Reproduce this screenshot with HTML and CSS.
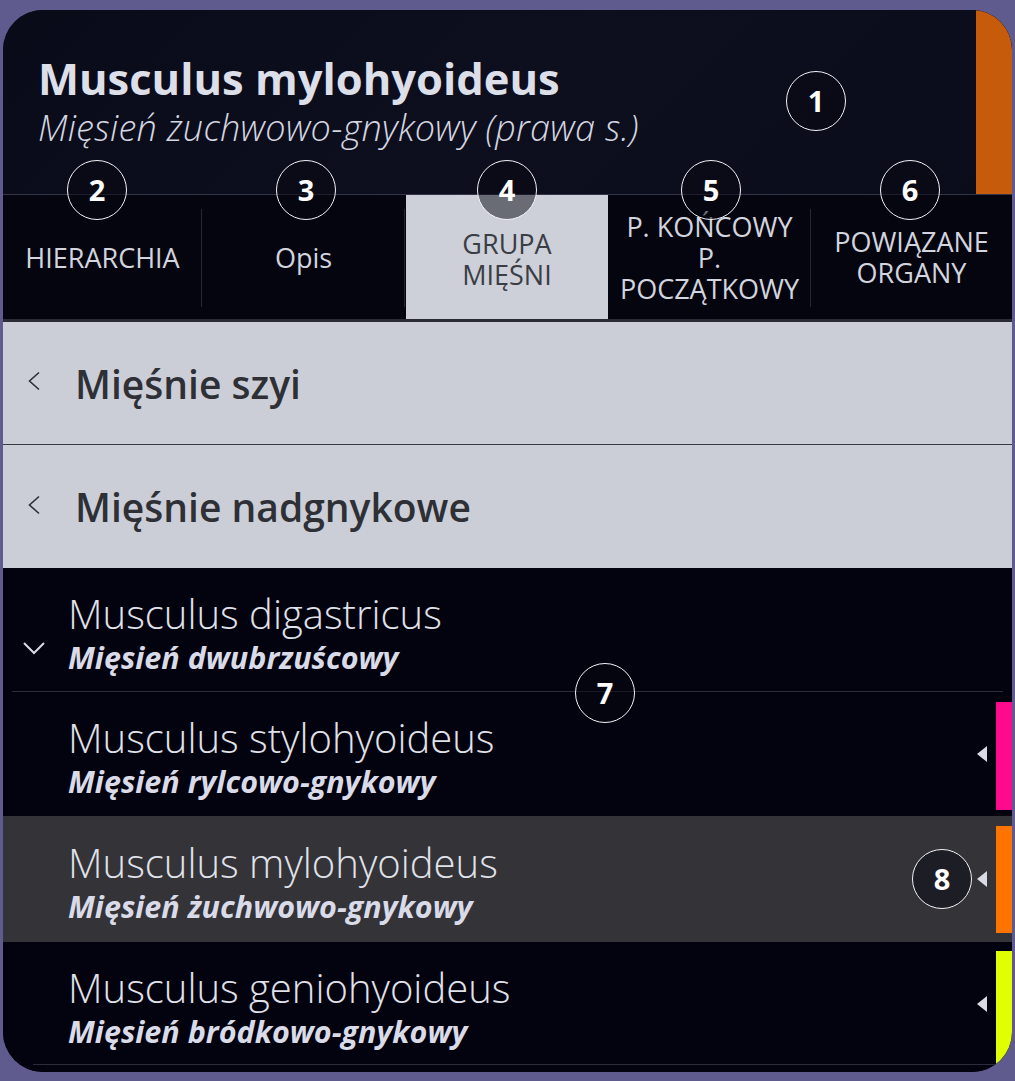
FILE: index.html
```html
<!DOCTYPE html>
<html lang="pl">
<head>
<meta charset="utf-8">
<title>Musculus mylohyoideus</title>
<link rel="stylesheet" href="styles.css">
</head>
<body>
<div class="card">
  <header class="head">
    <div class="head-text">
      <h1 class="title">Musculus mylohyoideus</h1>
      <p class="subtitle">Mięsień żuchwowo-gnykowy (prawa s.)</p>
    </div>
    <div class="head-stripe"></div>
    <span class="badge b1">1</span>
  </header>

  <nav class="tabs">
    <div class="tab sep">HIERARCHIA</div>
    <div class="tab sep tab-mixed">Opis</div>
    <div class="tab active">GRUPA<br>MIĘŚNI</div>
    <div class="tab sep">P. KOŃCOWY<br>P.<br>POCZĄTKOWY</div>
    <div class="tab">POWIĄZANE<br>ORGANY</div>
    <span class="badge b2">2</span>
    <span class="badge b3">3</span>
    <span class="badge b4">4</span>
    <span class="badge b5">5</span>
    <span class="badge b6">6</span>
  </nav>

  <div class="crumbs">
    <div class="crumb">
      <svg class="chev" viewBox="0 0 14 20" width="14" height="20"><path d="M12 1.5 L2.5 10 L12 18.5" fill="none" stroke="#2e3036" stroke-width="1.6"/></svg>
      <span>Mięśnie szyi</span>
    </div>
    <div class="crumb">
      <svg class="chev" viewBox="0 0 14 20" width="14" height="20"><path d="M12 1.5 L2.5 10 L12 18.5" fill="none" stroke="#2e3036" stroke-width="1.6"/></svg>
      <span>Mięśnie nadgnykowe</span>
    </div>
  </div>

  <div class="list">
    <div class="row first">
      <svg class="down" viewBox="0 0 24 14" width="24" height="14"><path d="M2 2 L12 12 L22 2" fill="none" stroke="#d8dae4" stroke-width="2"/></svg>
      <div class="names">
        <div class="latin">Musculus digastricus</div>
        <div class="polish">Mięsień dwubrzuścowy</div>
      </div>
    </div>
    <div class="row">
      <div class="names">
        <div class="latin">Musculus stylohyoideus</div>
        <div class="polish">Mięsień rylcowo-gnykowy</div>
      </div>
      <span class="tri"></span>
      <span class="stripe magenta"></span>
    </div>
    <div class="row selected">
      <div class="names">
        <div class="latin">Musculus mylohyoideus</div>
        <div class="polish">Mięsień żuchwowo-gnykowy</div>
      </div>
      <span class="tri"></span>
      <span class="stripe orange"></span>
      <span class="badge b8">8</span>
    </div>
    <div class="row last">
      <div class="names">
        <div class="latin">Musculus geniohyoideus</div>
        <div class="polish">Mięsień bródkowo-gnykowy</div>
      </div>
      <span class="tri"></span>
      <span class="stripe yellow"></span>
    </div>
    <span class="badge b7">7</span>
  </div>
</div>
</body>
</html>
```

FILE: styles.css
```css
* { box-sizing: border-box; }

html, body {
  margin: 0;
  padding: 0;
  background: #5f5b8e;
}

body {
  padding: 10px 3px 9px 3px;
  font-family: "Open Sans", "Noto Sans", sans-serif;
}

.card {
  position: relative;
  width: 1009px;
  height: 1062px;
  border-radius: 40px;
  overflow: hidden;
  background: #03030f;
  display: flex;
  flex-direction: column;
}

/* Header */
.head {
  position: relative;
  display: flex;
  height: 185px;
  background: linear-gradient(135deg, #0a0b19 0%, #0e0f1e 50%, #0b0c1a 100%);
  border-bottom: 1px solid #34354a;
}

.head-text {
  flex: 1;
  padding: 41px 0 0 35px;
  color: #dcdee8;
}

.title {
  margin: 0;
  font-size: 43.5px;
  line-height: 56px;
  font-weight: 700;
  color: #dcdee8;
}

.subtitle {
  margin: 0;
  font-size: 36px;
  line-height: 42px;
  font-style: italic;
  font-weight: 300;
  letter-spacing: 0.3px;
  color: #d4d6e0;
}

.head-stripe {
  width: 36px;
  background: #c65b0b;
}

/* Tabs */
.tabs {
  position: relative;
  display: grid;
  grid-template-columns: 199px 203px 203px 203px 1fr;
  height: 127px;
  background: #05050f;
  border-bottom: 3px solid #2a2b34;
}

.tab {
  display: flex;
  align-items: center;
  justify-content: center;
  text-align: center;
  font-size: 27px;
  line-height: 31px;
  color: #d2d4de;
  position: relative;
}

.tab.sep::after {
  content: "";
  position: absolute;
  right: 0;
  top: 14px;
  bottom: 12px;
  width: 1px;
  background: #262733;
}

.tab.active {
  background: #cdd0d8;
  color: #3b3d45;
  padding-top: 4px;
  margin-left: 1px;
}

/* Breadcrumbs */
.crumbs {
  background: #cbced6;
}

.crumb {
  display: flex;
  align-items: center;
  height: 122px;
  padding-left: 24px;
  font-size: 39px;
  font-weight: 600;
  color: #2e3036;
}

.crumb + .crumb {
  border-top: 1px solid #3a3b40;
  height: 124px;
}

.crumb .chev {
  margin-right: 34px;
  margin-top: -4px;
}

/* List */
.list {
  position: relative;
  flex: 1;
  background: #03030f;
}

.row {
  position: relative;
  display: flex;
  align-items: center;
  height: 124px;
  padding-left: 65px;
}

.row.first {
  padding-left: 19px;
}

.row.first::after {
  content: "";
  position: absolute;
  left: 9px;
  right: 9px;
  bottom: 0;
  height: 1px;
  background: #2c2d3c;
}

.row.first .down {
  margin-right: 22px;
  margin-top: 36px;
}

.row.selected {
  background: #333338;
  height: 126px;
}

.row.last::after {
  content: "";
  position: absolute;
  left: 30px;
  right: 10px;
  bottom: 1px;
  height: 1px;
  background: #2c2d3c;
}

.names {
  display: flex;
  flex-direction: column;
  padding-top: 8px;
}

.latin {
  font-size: 40px;
  line-height: 46px;
  font-weight: 300;
  color: #e0e2ea;
}

.polish {
  font-size: 30.5px;
  line-height: 40px;
  font-weight: 700;
  font-style: italic;
  color: #dadbe8;
}

.tri {
  position: absolute;
  right: 25px;
  top: 50%;
  margin-top: -8px;
  width: 0;
  height: 0;
  border-top: 8px solid transparent;
  border-bottom: 8px solid transparent;
  border-right: 10px solid #d8dae4;
}

.stripe {
  position: absolute;
  right: 0;
  width: 16px;
}

.stripe.magenta { top: 10px; bottom: 6px; background: #ff0a8c; }
.stripe.orange { top: 10px; bottom: 9px; background: #ff7300; }
.stripe.yellow { top: 9px; bottom: 0; background: #e0ff00; }

/* Badges (annotation overlays) */
.badge {
  position: absolute;
  width: 60px;
  height: 60px;
  border: 1.5px solid #f2f2f6;
  border-radius: 50%;
  background: rgba(8, 8, 18, 0.5);
  color: #ffffff;
  font-family: "Open Sans", sans-serif;
  font-weight: 700;
  font-size: 29px;
  line-height: 57px;
  text-align: center;
  z-index: 5;
}

.b1 { left: 783px; top: 61px; }
.b2 { left: 64px; top: -35px; }
.b3 { left: 273px; top: -35px; }
.b4 { left: 474px; top: -35px; }
.b5 { left: 678px; top: -35px; }
.b6 { left: 877px; top: -35px; }
.b7 { left: 572px; top: 95px; }
.b8 { right: 40px; top: 33px; }
```
